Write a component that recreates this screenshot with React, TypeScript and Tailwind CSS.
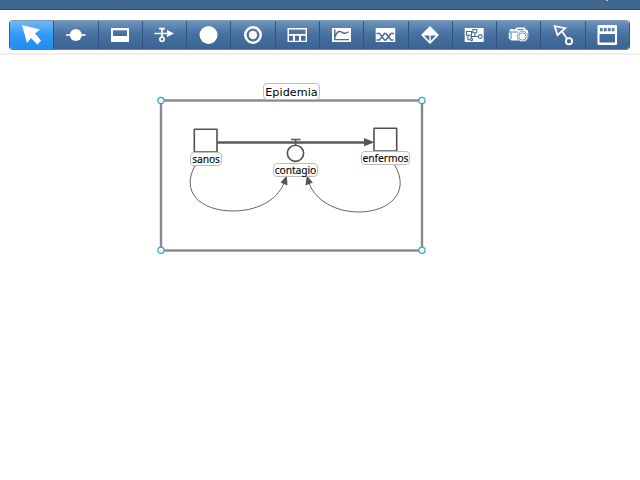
import type { ReactNode } from "react";

const BLUE = "#426c9c";

const icons: { name: string; art: ReactNode }[] = [
  { name: "Pointer", art: <path fill="#fff" d="M3 2L21 6.5L16 10.5L22 17.5L18.5 21.5L12 15L8 20Z" /> },
  {
    name: "Variable",
    art: (
      <g fill="#fff">
        <circle cx="12.8" cy="12" r="6" />
        <rect x="3" y="11.2" width="19.5" height="1.6" />
      </g>
    ),
  },
  {
    name: "Stock",
    art: <path fill="#fff" fillRule="evenodd" d="M3 5H21V19H3ZM5 7.2V13H19V7.2Z" />,
  },
  {
    name: "Flow",
    art: (
      <g stroke="#fff" fill="none" strokeWidth="1.7">
        <path d="M2.5 10.5H17M7 5.7H13M10 5.7V14.5" />
        <circle cx="10" cy="16.2" r="2.1" />
        <path fill="#fff" stroke="none" d="M15 7L22 10.5L15 14Z" />
      </g>
    ),
  },
  { name: "Converter", art: <circle cx="12.5" cy="12" r="9" fill="#fff" /> },
  {
    name: "Rate",
    art: (
      <g>
        <circle cx="12" cy="12" r="7.7" fill="none" stroke="#fff" strokeWidth="2.6" />
        <circle cx="12" cy="12" r="4.2" fill="#fff" />
      </g>
    ),
  },
  {
    name: "Table",
    art: (
      <path fill="#fff" fillRule="evenodd" d="M2.5 5H22V19H2.5ZM4 6.5V11H20.5V6.5ZM4 12.7V17.7H8V12.7ZM10 12.7V17.7H14V12.7ZM16 12.7V17.7H20.5V12.7Z" />
    ),
  },
  {
    name: "Graph",
    art: (
      <g transform="translate(.5 0)">
        <path fill="#fff" d="M2.5 5H21.5V19H2.5Z" />
        <path fill="none" stroke={BLUE} strokeWidth="1.4" d="M5.3 6.5V16.6H19.5M5.8 13.5C7 9.5 9 8.2 11 8.6C13 9 14 12.5 19 8.8" />
      </g>
    ),
  },
  {
    name: "Comparison",
    art: (
      <g>
        <path fill="#fff" d="M2.7 5H22.2V19H2.7Z" />
        <path fill="none" stroke={BLUE} strokeWidth="1.4" d="M3.5 10.5H6.5L11.5 17H13L18 10.5H21M3.5 17H6.5L11.5 10.5H13L18 17H20.5" />
      </g>
    ),
  },
  {
    name: "Decision",
    art: (
      <path fill="#fff" fillRule="evenodd" d="M12 3L21 12L12 21L3 12ZM6 12.5L11.3 18V12.5ZM12.7 12.5V18L18 12.5Z" />
    ),
  },
  {
    name: "Submodel",
    art: (
      <g>
        <path fill="#fff" d="M2.7 5H21.7V19H2.7Z" />
        <g fill="none" stroke={BLUE} strokeWidth="1.1">
          <path d="M4.5 8.5H9.5V12.3H4.5ZM11 6.5H14.7V9.8H11ZM6 12.3V16.7H8M8.5 13.5H16.5M13 9.8V13.5M9.5 9H11M9.5 13.5V15.5" />
          <circle cx="18.3" cy="13.5" r="1.9" />
          <circle cx="9.5" cy="16.5" r="1.1" />
        </g>
      </g>
    ),
  },
  {
    name: "Snapshot",
    art: (
      <g transform="translate(.5 0)">
        <path fill="#fff" d="M3 7.5L4 6H7L8 6.8L10 4.5H18L20 7H21.2L21.8 10V15L20 17.5H5L2.3 15.5V10Z" />
        <path fill="none" stroke={BLUE} strokeWidth=".9" d="M2.5 9H11M11 6.7H17M4.5 9.5V16" />
        <circle cx="16" cy="13.5" r="5.3" fill="#fff" stroke={BLUE} strokeWidth=".6" />
        <circle cx="16" cy="13.5" r="3.7" fill="#fff" stroke="#7898bd" strokeWidth="1" />
      </g>
    ),
  },
  {
    name: "Ghost",
    art: (
      <g fill="none" stroke="#fff" strokeWidth="1.8">
        <path d="M3.7 3.2L14.2 5.2L6.5 12.2Z" />
        <path d="M11 8.5L16 15.5" />
        <circle cx="18" cy="18.2" r="3.1" />
      </g>
    ),
  },
  {
    name: "Window",
    art: (
      <path fill="#fff" fillRule="evenodd" d="M3.7 2H20.8Q22 2 22 3.2V20.8Q22 22 20.8 22H3.7Q2.5 22 2.5 20.8V3.2Q2.5 2 3.7 2ZM5 5V8.3H7.7V5ZM8.8 5V8.3H11.7V5ZM12.8 5V8.3H15.7V5ZM16.8 5V8.3H19.5V5ZM4.5 11V19.5H20V11Z" />
    ),
  },
];

function Toolbar() {
  return (
    <div className="h-[45px] border-b-2 border-[#f0f0f0] pl-[9px] pt-[10px]">
      <div className="flex h-[30px] w-[621px] overflow-hidden rounded-[4px] border border-x-[#365c87] border-t-[#7c9bb1] border-b-[#637f9c]">
        {icons.map((icon, i) => (
          <button
            key={icon.name}
            aria-label={icon.name}
            className={
              "flex min-w-0 flex-1 items-center justify-center border-r border-[#2f5680] last:border-r-0 " +
              (i === 0
                ? "bg-linear-to-b from-[#70b7fb] via-[#3298f5] to-[#218cf0]"
                : "bg-linear-to-b from-[#6d94bf] via-[#466f9f] to-[#3c6492]")
            }
          >
            <svg className="-ml-px size-6 shrink-0" viewBox="0 0 24 24">
              {icon.art}
            </svg>
          </button>
        ))}
      </div>
    </div>
  );
}

const labelBase =
  "absolute flex items-center justify-center whitespace-nowrap rounded-[4px] border border-[#bcbcbc] bg-white text-black ";

const nodeLabel =
  "font-['Noto_Sans',sans-serif] text-[10.3px] leading-[14px] tracking-[-0.1px] [-webkit-text-stroke:0.1px_#000] ";

function Diagram() {
  return (
    <main className="relative h-[425px]">
      <svg className="block h-[425px] w-[640px]" viewBox="0 55 640 425">
        <rect x="161" y="100.5" width="261" height="150" fill="#fff" stroke="#898989" strokeWidth="2.4" />
        <g fill="none" stroke="#666" strokeWidth="1">
          <path d="M196 164C179 192 201 211 233 211C256 211 277 201 284 183" />
          <path d="M394 164C412 193 388 212 359 212C335 212 315 200 309 183" />
        </g>
        <g fill="#555">
          <path d="M286.8 175.5L280.5 182.5L287.5 185.5Z" />
          <path d="M306.8 175.5L305.5 185.5L312.8 182.5Z" />
          <path d="M364 138L374.5 142.2L364 146.2Z" />
        </g>
        <path d="M217 142.5H366" stroke="#595959" strokeWidth="2.6" />
        <path d="M291 139.6H300.5M295.6 139V145" fill="none" stroke="#555" strokeWidth="1.5" />
        <g fill="#fff" stroke="#505050" strokeWidth="1.6">
          <rect x="194.3" y="129.3" width="22.7" height="22.7" rx=".5" />
          <rect x="374" y="128.3" width="22.7" height="22.7" rx=".5" />
          <circle cx="295.5" cy="153.3" r="8.1" />
        </g>
        <g fill="#fff" stroke="#38a2cc" strokeWidth="1.2">
          <circle cx="161" cy="100.5" r="3.1" />
          <circle cx="422" cy="100.5" r="3.1" />
          <circle cx="161" cy="250.3" r="3.1" />
          <circle cx="422" cy="250.3" r="3.1" />
        </g>
      </svg>
      <span className={labelBase + "left-[263px] top-[28px] h-[17px] w-[57px] pt-[3px] font-['DejaVu_Sans',sans-serif] text-[11.2px] tracking-[0.05px] leading-[14px]"}>
        Epidemia
      </span>
      <span className={labelBase + nodeLabel + "left-[190px] top-[97px] h-[14px] w-[32px]"}>sanos</span>
      <span className={labelBase + nodeLabel + "left-[273px] top-[108px] h-[14px] w-[45px]"}>contagio</span>
      <span className={labelBase + nodeLabel + "left-[361px] top-[96px] h-[14px] w-[49px]"}>enfermos</span>
    </main>
  );
}

export default function App() {
  return (
    <div className="h-[480px] w-[640px] overflow-hidden bg-white">
      <header className="flex h-[10px] items-start justify-end border-b border-[#2b507b] bg-[#41668f] pr-[32px]">
        <span className="h-px w-[2px] bg-[#b3bfcc]" />
      </header>
      <Toolbar />
      <Diagram />
    </div>
  );
}
